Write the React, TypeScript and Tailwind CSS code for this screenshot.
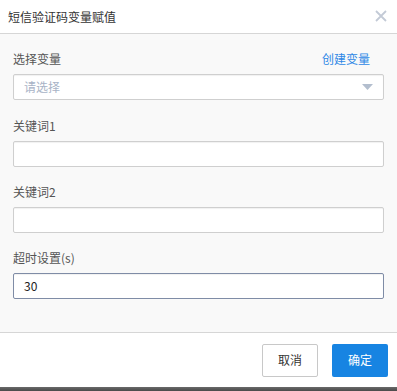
import React from 'react';

const font = { fontFamily: '"Noto Sans CJK SC", "Open Sans", sans-serif' };

const Field = ({ label, children, className = '' }: { label: string; children: React.ReactNode; className?: string }) => (
  <div className={'flex flex-col ' + className}>
    <div className="h-4 leading-4 text-[12px] text-[#555]">{label}</div>
    <div className="mt-[7px]">{children}</div>
  </div>
);

const TextBox = ({ value, focused }: { value?: string; focused?: boolean }) => (
  <div
    className={
      'h-[26px] bg-white border rounded-[2px] flex items-center px-[10px] text-[12px] text-[#222] shadow-[inset_0_1px_1px_rgba(0,0,0,0.06)] ' +
      (focused ? 'border-[#7f8ca6]' : 'border-[#cfcfcf]')
    }
  >
    {value}
  </div>
);

export default function App() {
  return (
    <div className="w-[397px] h-[391px] flex flex-col bg-[#555]" style={font}>
      <div className="h-[34px] shrink-0 bg-white border-b border-[#d6d6d6] flex items-center justify-between pl-2 pr-[10px]">
        <span className="text-[12px] text-[#333]">短信验证码变量赋值</span>
        <svg width="12" height="12" viewBox="0 0 12 12" className="mt-[-2px]">
          <path d="M1 1L11 11M11 1L1 11" stroke="#c3cad6" strokeWidth="1.8" />
        </svg>
      </div>

      <div className="flex-1 bg-[#f9f9f9] border-b border-[#d6d6d6] px-[13px] pt-[17px] flex flex-col gap-[17px]">
        <Field label="选择变量" className="mb-[1px]">
          <div className="relative">
            <span className="absolute right-[14px] -top-[23px] text-[12px] leading-4 text-[#2e88e6]">创建变量</span>
            <div className="h-[26px] bg-white border border-[#cfcfcf] rounded-[2px] flex items-center justify-between pl-[10px] pr-[10px] text-[12px] text-[#a8b3c6] shadow-[inset_0_1px_1px_rgba(0,0,0,0.06)]">
              <span>请选择</span>
              <svg width="11" height="6" viewBox="0 0 11 6">
                <path d="M0 0H11L5.5 6Z" fill="#b3bece" />
              </svg>
            </div>
          </div>
        </Field>
        <Field label="关键词1">
          <TextBox />
        </Field>
        <Field label="关键词2">
          <TextBox />
        </Field>
        <Field label="超时设置(s)">
          <TextBox value="30" focused />
        </Field>
      </div>

      <div className="h-[54px] shrink-0 bg-white flex items-center justify-end gap-[14px] pr-[9px]">
        <button className="w-[56px] h-[33px] bg-white border border-[#c8c8c8] rounded-[2px] text-[12px] text-[#333]">
          取消
        </button>
        <button className="w-[56px] h-[33px] bg-[#1784e2] rounded-[2px] text-[12px] text-white">确定</button>
      </div>
      <div className="h-[4px] shrink-0 bg-gradient-to-b from-[#6a6a6a] to-[#4a4a4a]" />
    </div>
  );
}
